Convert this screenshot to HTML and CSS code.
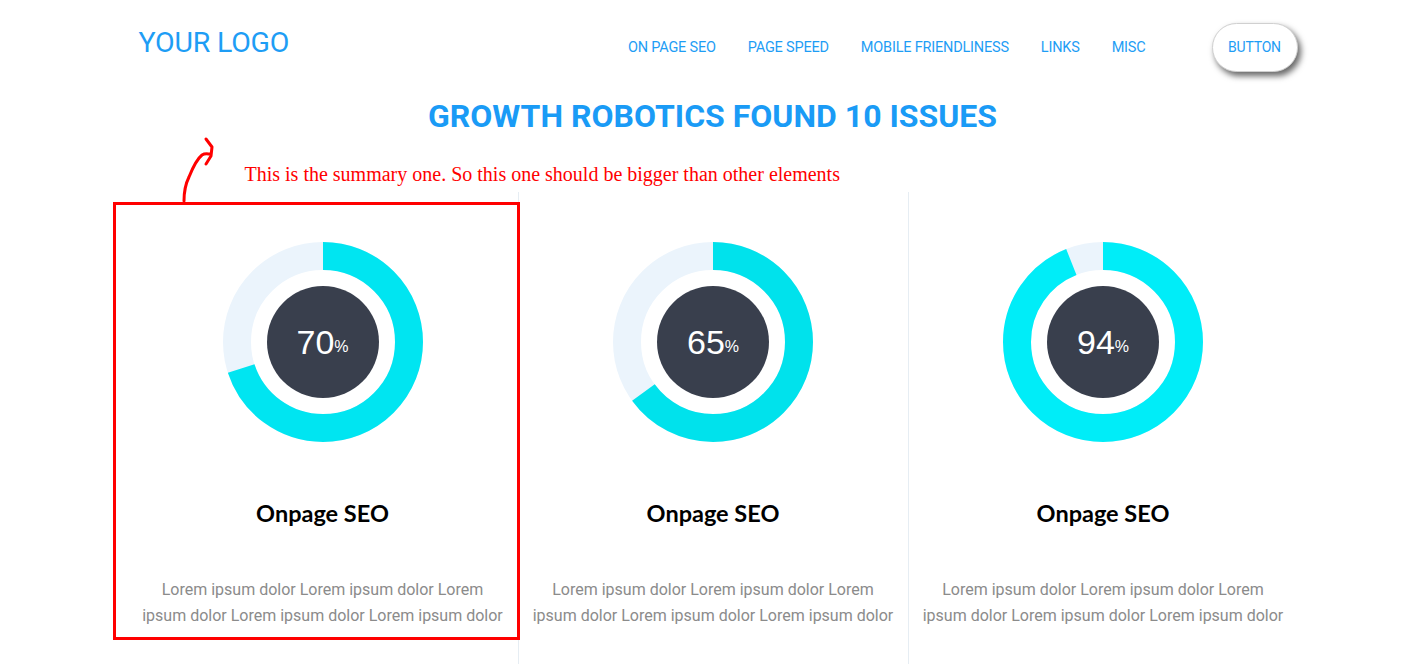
FILE: index.html
```html
<!DOCTYPE html>
<html>
<head>
<meta charset="utf-8">
<link rel="stylesheet" href="styles.css">
</head>
<body>
<div class="container">
  <header class="header">
    <div class="logo">YOUR LOGO</div>
    <nav class="nav">
      <a href="#">ON PAGE SEO</a>
      <a href="#">PAGE SPEED</a>
      <a href="#">MOBILE FRIENDLINESS</a>
      <a href="#">LINKS</a>
      <a href="#">MISC</a>
    </nav>
    <button class="btn">BUTTON</button>
  </header>

  <h1 class="headline">GROWTH ROBOTICS FOUND 10 ISSUES</h1>

  <div class="note">
    <svg class="note-arrow" width="50" height="70" viewBox="0 0 50 70">
      <path d="M8 66 C8 58 9 50 13 42 C17 32 21 24 26 20 C29 18 32 19 34 19" fill="none" stroke="#ff0000" stroke-width="3" stroke-linecap="round"/>
      <path d="M30 4 L36 12 L35 21 L30 29" fill="none" stroke="#ff0000" stroke-width="3" stroke-linecap="round" stroke-linejoin="round"/>
    </svg>
    <span class="note-text">This is the summary one. So this one should be bigger than other elements</span>
  </div>

  <section class="cols">
    <div class="highlight"></div>
    <div class="col">
      <div class="donut">
        <svg width="200" height="200" viewBox="0 0 200 200">
          <circle cx="100" cy="100" r="86" fill="none" stroke="#ebf4fc" stroke-width="28"/>
          <circle cx="100" cy="100" r="86" fill="none" stroke="#00e5f1" stroke-width="28" pathLength="100" stroke-dasharray="70 100" transform="rotate(-90 100 100)"/>
          <circle cx="100" cy="100" r="56" fill="#393f4d"/>
        </svg>
        <div class="donut-label">70<span class="pct">%</span></div>
      </div>
      <h2 class="col-title">Onpage SEO</h2>
      <p class="col-text">Lorem ipsum dolor Lorem ipsum dolor Lorem ipsum dolor Lorem ipsum dolor Lorem ipsum dolor</p>
    </div>
    <div class="col">
      <div class="donut">
        <svg width="200" height="200" viewBox="0 0 200 200">
          <circle cx="100" cy="100" r="86" fill="none" stroke="#ebf4fc" stroke-width="28"/>
          <circle cx="100" cy="100" r="86" fill="none" stroke="#00e2ec" stroke-width="28" pathLength="100" stroke-dasharray="65 100" transform="rotate(-90 100 100)"/>
          <circle cx="100" cy="100" r="56" fill="#393f4d"/>
        </svg>
        <div class="donut-label">65<span class="pct">%</span></div>
      </div>
      <h2 class="col-title">Onpage SEO</h2>
      <p class="col-text">Lorem ipsum dolor Lorem ipsum dolor Lorem ipsum dolor Lorem ipsum dolor Lorem ipsum dolor</p>
    </div>
    <div class="col">
      <div class="donut">
        <svg width="200" height="200" viewBox="0 0 200 200">
          <circle cx="100" cy="100" r="86" fill="none" stroke="#ebf4fc" stroke-width="28"/>
          <circle cx="100" cy="100" r="86" fill="none" stroke="#00edf8" stroke-width="28" pathLength="100" stroke-dasharray="94 100" transform="rotate(-90 100 100)"/>
          <circle cx="100" cy="100" r="56" fill="#393f4d"/>
        </svg>
        <div class="donut-label">94<span class="pct">%</span></div>
      </div>
      <h2 class="col-title">Onpage SEO</h2>
      <p class="col-text">Lorem ipsum dolor Lorem ipsum dolor Lorem ipsum dolor Lorem ipsum dolor Lorem ipsum dolor</p>
    </div>
  </section>
</div>
</body>
</html>
```
FILE: styles.css
```css
* { box-sizing: border-box; }
html, body { margin: 0; padding: 0; background: #fff; }
body { font-family: Roboto, "Liberation Sans", sans-serif; overflow: hidden; height: 664px; }

.container {
  width: 1170px;
  margin: 0 auto;
}

.header {
  display: flex;
  align-items: center;
  padding: 23px 0 0 11px;
  height: 72px;
}
.logo {
  font-size: 28.5px;
  color: #1e9df5;
  line-height: 33px;
  margin-top: -10px;
  letter-spacing: -0.2px;
}
.nav {
  margin-left: auto;
  display: flex;
  gap: 32px;
  margin-top: -1px;
}
.nav a {
  font-size: 14.5px;
  color: #1e9df5;
  text-decoration: none;
  letter-spacing: -0.2px;
}
.btn {
  margin-left: 66px;
  width: 86px;
  height: 49px;
  border-radius: 25px;
  background: #fff;
  border: 1px solid #d0d0d0;
  box-shadow: 3px 4px 6px rgba(0,0,0,0.6);
  font-family: Roboto, sans-serif;
  font-size: 14px;
  color: #1e9df5;
  letter-spacing: -0.2px;
  padding: 0 0 2px;
}

.headline {
  margin: 24px 0 0;
  text-align: center;
  font-size: 32px;
  line-height: 40px;
  font-weight: 700;
  color: #1a9bf6;
}

.note {
  position: relative;
  height: 56px;
  padding: 27px 0 0 117px;
}
.note-text {
  font-family: "Liberation Serif", serif;
  font-size: 20px;
  color: #ff0000;
}
.note-arrow {
  position: absolute;
  left: 48px;
  top: -1px;
}

.cols {
  position: relative;
  display: grid;
  grid-template-columns: repeat(3, 390px);
  height: 472px;
}
.highlight {
  position: absolute;
  left: -15px;
  top: 10px;
  width: 407px;
  height: 438px;
  border: 3px solid #ff0000;
  pointer-events: none;
}
.col {
  padding: 50px 12px 0;
  text-align: center;
}
.col + .col { border-left: 1px solid #e6edf3; }

.donut {
  position: relative;
  width: 200px;
  height: 200px;
  margin: 0 auto;
}
.donut svg { display: block; }
.donut-label {
  position: absolute;
  inset: 0;
  display: flex;
  align-items: center;
  justify-content: center;
  font-family: "Liberation Sans", Arial, sans-serif;
  font-size: 34px;
  color: #fff;
  padding-top: 0;
}
.pct {
  font-size: 16px;
  margin-top: 10px;
}

.col-title {
  margin: 58px 0 0;
  font-family: Lato, "Open Sans", sans-serif;
  font-weight: 700;
  font-size: 23.5px;
  line-height: 26px;
  color: #000;
}
.col-text {
  margin: 51px 0 0;
  font-size: 16px;
  line-height: 26px;
  color: #8b8b8b;
}
```
